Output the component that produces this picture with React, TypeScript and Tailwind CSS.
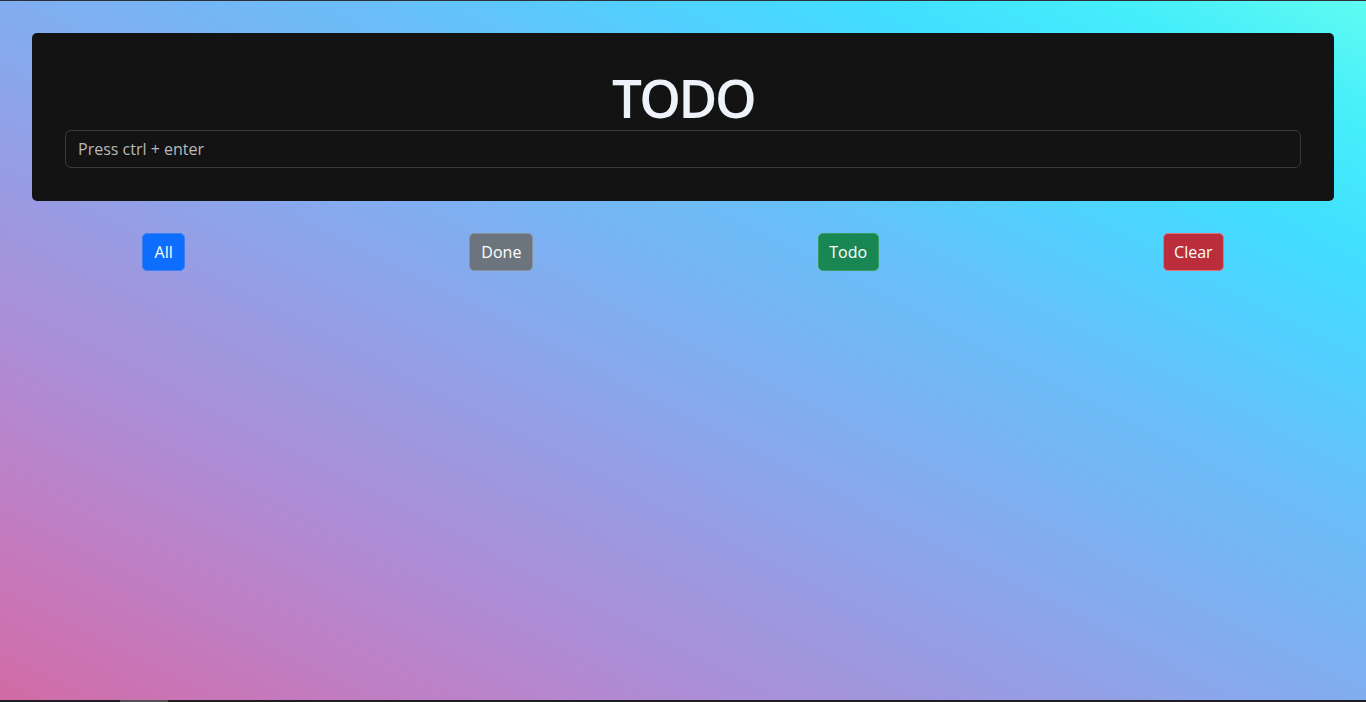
import React from "react";

export default function App() {
  const font = { fontFamily: '"Open Sans", "Noto Sans", "Liberation Sans", sans-serif' };
  return (
    <div
      className="h-[702px] w-full flex flex-col overflow-hidden bg-[linear-gradient(to_right_top,#d16ba5,#c777b9,#ba83ca,#aa8fd8,#9a9ae1,#8aa7ec,#79b3f4,#69bff8,#52cffe,#41dfff,#46eefa,#5ffbf1)]"
      style={font}
    >
      <div className="h-px w-full bg-[#2d3038]" />
      <div className="flex-1 flex flex-col">
        <div className="mx-8 mt-8 rounded-[5px] bg-[#131313] p-[33px]">
          <h1 className="text-center text-[53px] leading-[64px] font-semibold text-[#eef2f9] tracking-[-2.5px]">
            TODO
          </h1>
          <input
            className="block w-full h-[38px] rounded-[6px] border border-[#3a3a3a] bg-[#131313] px-3 text-[16px] text-[#dddddd] placeholder:text-[#b8b8b8] outline-none"
            placeholder="Press ctrl + enter"
          />
        </div>
        <div className="mt-[32px] flex justify-around">
          <button className="h-[38px] w-[43px] rounded-[5px] border border-[#3d7ff0] bg-[#0d6efd] text-[16px] text-white">
            All
          </button>
          <button className="h-[38px] w-[64px] rounded-[5px] border border-[#8a939a] bg-[#6c757d] text-[16px] text-white">
            Done
          </button>
          <button className="h-[38px] w-[61px] rounded-[5px] border border-[#3a9a6a] bg-[#198754] text-[16px] text-white">
            Todo
          </button>
          <button className="h-[38px] w-[61px] rounded-[5px] border border-[#e4707c] bg-[#bb2d3b] text-[16px] text-white">
            Clear
          </button>
        </div>
      </div>
      <div className="h-[2px] w-full bg-[#1f1f23] flex">
        <div className="ml-[120px] w-[48px] h-full bg-[#505055]" />
      </div>
    </div>
  );
}
